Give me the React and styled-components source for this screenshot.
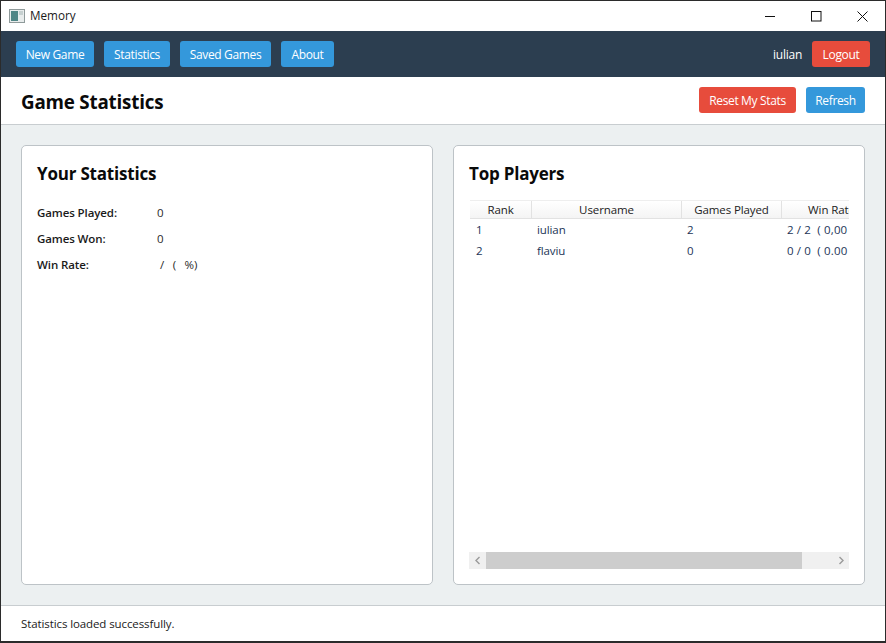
import React from "react";
import styled, { createGlobalStyle } from "styled-components";

const GlobalStyle = createGlobalStyle`
  html, body {
    margin: 0;
    padding: 0;
    background: #fff;
  }
  * {
    box-sizing: border-box;
  }
`;

const Window = styled.div`
  width: 886px;
  height: 643px;
  display: flex;
  flex-direction: column;
  border: 1px solid #2b2b2b;
  border-bottom-width: 2px;
  font-family: "Open Sans", "Noto Sans", sans-serif;
  font-size: 12px;
  color: #111;
  overflow: hidden;
`;

const TitleBar = styled.div`
  height: 30px;
  flex: none;
  display: flex;
  align-items: center;
  padding-left: 8px;
  background: #fff;
`;

const AppIcon = styled.svg`
  width: 16px;
  height: 16px;
  margin-right: 5px;
`;

const TitleText = styled.span`
  flex: 1;
  font-size: 11.7px;
  line-height: 14px;
  margin-bottom: 2px;
  color: #1a1a1a;
`;

const WinButton = styled.div`
  width: 46px;
  height: 30px;
  display: flex;
  align-items: center;
  justify-content: center;
`;

const NavBar = styled.div`
  height: 46px;
  flex: none;
  display: flex;
  align-items: center;
  gap: 10px;
  padding: 0 15px;
  background: #2c3e50;
`;

const Button = styled.div`
  width: ${({ $width }) => $width}px;
  height: 26px;
  display: flex;
  align-items: center;
  justify-content: center;
  border-radius: 3px;
  font-size: 12px;
  letter-spacing: -0.35px;
  color: #fff;
  white-space: nowrap;
  background: ${({ $danger }) => ($danger ? "#e74c3c" : "#3498db")};
`;

const Spacer = styled.div`
  flex: 1;
`;

const UserName = styled.span`
  color: #fff;
  font-size: 12px;
  letter-spacing: -0.25px;
`;

const Header = styled.div`
  height: 48px;
  flex: none;
  display: flex;
  align-items: center;
  justify-content: space-between;
  padding: 0 20px;
  background: #fff;
  border-bottom: 1px solid #c8cdd0;
`;

const PageTitle = styled.h1`
  margin: 2px 0 0;
  font-size: 18.8px;
  font-weight: 700;
  letter-spacing: -0.2px;
  color: #0a0a0a;
`;

const HeaderActions = styled.div`
  display: flex;
  gap: 10px;
  margin-bottom: 1px;
`;

const Content = styled.div`
  flex: 1;
  min-height: 0;
  display: grid;
  grid-template-columns: 1fr 1fr;
  gap: 20px;
  padding: 20px;
  background: #ecf0f1;
`;

const Card = styled.div`
  background: #fff;
  border: 1px solid #bdc3c7;
  border-radius: 5px;
  padding: 15px;
  display: flex;
  flex-direction: column;
  min-width: 0;
`;

const CardTitle = styled.h2`
  margin: 1px 0 13px;
  font-size: 17px;
  line-height: 24px;
  font-weight: 700;
  letter-spacing: -0.2px;
  color: #0a0a0a;
`;

const StatRow = styled.div`
  display: flex;
  height: 26px;
  align-items: center;
  font-size: 11.5px;
  letter-spacing: -0.1px;
`;

const StatLabel = styled.span`
  width: 120px;
  font-weight: 600;
  color: #1a1a1a;
`;

const StatValue = styled.span`
  color: #2a2a2a;
  white-space: pre;
`;

const TableWrap = styled.div`
  flex: 1;
  display: flex;
  flex-direction: column;
  min-height: 0;
`;

const TableClip = styled.div`
  flex: 1;
  margin-left: 1px;
  overflow: hidden;
`;

const HeadRow = styled.div`
  display: grid;
  grid-template-columns: 62px 150px 100px 100px;
  height: 19px;
  margin-top: 1px;
  background: linear-gradient(#ffffff, #f4f4f4);
  border-top: 1px solid #eeeeee;
  border-bottom: 1px solid #e2e2e2;
`;

const HeadCell = styled.div`
  display: flex;
  align-items: center;
  justify-content: center;
  font-size: 11.5px;
  letter-spacing: -0.1px;
  color: #222;
  white-space: nowrap;
  border-right: 1px solid #e2e2e2;
`;

const BodyRow = styled.div`
  display: grid;
  grid-template-columns: 62px 150px 100px 68px;
  height: 21px;
  align-items: center;
  font-size: 11.5px;
  letter-spacing: -0.1px;
  color: #1c3557;
`;

const BodyCell = styled.div`
  padding-left: ${({ $pad }) => $pad}px;
  letter-spacing: ${({ $wide }) => ($wide ? "0.15px" : "inherit")};
  white-space: pre;
  overflow: hidden;
`;

const ScrollBar = styled.div`
  height: 17px;
  flex: none;
  display: flex;
  align-items: center;
  background: #f0f0f0;
`;

const ScrollArrow = styled.div`
  width: 17px;
  height: 17px;
  display: flex;
  align-items: center;
  justify-content: center;
  flex: none;
`;

const ScrollThumb = styled.div`
  width: 316px;
  height: 17px;
  flex: none;
  background: #cdcdcd;
`;

const StatusBar = styled.div`
  height: 36px;
  flex: none;
  display: flex;
  align-items: center;
  padding: 0 20px;
  background: #fff;
  border-top: 1px solid #c8cdd0;
  font-size: 11.5px;
  letter-spacing: -0.1px;
  color: #1a1a1a;
`;

const Chevron = ({ left }) => (
  <svg width="8" height="9" viewBox="0 0 8 9">
    <path
      d={left ? "M5.5 1 L2 4.5 L5.5 8" : "M2.5 1 L6 4.5 L2.5 8"}
      fill="none"
      stroke="#9a9a9a"
      strokeWidth="1.4"
    />
  </svg>
);

const players = [
  { rank: "1", name: "iulian", played: "2", rate: "2 / 2  ( 0,00" },
  { rank: "2", name: "flaviu", played: "0", rate: "0 / 0  ( 0.00" },
];

export default function App() {
  return (
    <Window>
      <GlobalStyle />
      <TitleBar>
        <AppIcon viewBox="0 0 16 16">
          <rect x="0.5" y="1.5" width="15" height="13" fill="#e8ecec" stroke="#8f9a9a" />
          <rect x="2" y="3" width="7" height="10" fill="#4f8585" />
          <rect x="10" y="3" width="4" height="4" fill="#c6d0d0" />
        </AppIcon>
        <TitleText>Memory</TitleText>
        <WinButton>
          <svg width="11" height="11" viewBox="0 0 11 11">
            <path d="M0 5.5 H10" stroke="#111" strokeWidth="1" />
          </svg>
        </WinButton>
        <WinButton>
          <svg width="11" height="11" viewBox="0 0 11 11">
            <rect x="0.5" y="0.5" width="9.5" height="9.5" fill="none" stroke="#111" />
          </svg>
        </WinButton>
        <WinButton>
          <svg width="11" height="11" viewBox="0 0 11 11">
            <path d="M0.5 0.5 L10.5 10.5 M10.5 0.5 L0.5 10.5" stroke="#111" strokeWidth="1" />
          </svg>
        </WinButton>
      </TitleBar>
      <NavBar>
        <Button $width={78}>New Game</Button>
        <Button $width={66}>Statistics</Button>
        <Button $width={91}>Saved Games</Button>
        <Button $width={53}>About</Button>
        <Spacer />
        <UserName>iulian</UserName>
        <Button $width={58} $danger>Logout</Button>
      </NavBar>
      <Header>
        <PageTitle>Game Statistics</PageTitle>
        <HeaderActions>
          <Button $width={97} $danger>Reset My Stats</Button>
          <Button $width={59}>Refresh</Button>
        </HeaderActions>
      </Header>
      <Content>
        <Card>
          <CardTitle>Your Statistics</CardTitle>
          <StatRow>
            <StatLabel>Games Played:</StatLabel>
            <StatValue>0</StatValue>
          </StatRow>
          <StatRow>
            <StatLabel>Games Won:</StatLabel>
            <StatValue>0</StatValue>
          </StatRow>
          <StatRow>
            <StatLabel>Win Rate:</StatLabel>
            <StatValue> /   (   %)</StatValue>
          </StatRow>
        </Card>
        <Card>
          <CardTitle>Top Players</CardTitle>
          <TableWrap>
            <TableClip>
              <HeadRow>
                <HeadCell>Rank</HeadCell>
                <HeadCell>Username</HeadCell>
                <HeadCell>Games Played</HeadCell>
                <HeadCell>Win Rate</HeadCell>
              </HeadRow>
              {players.map((p) => (
                <BodyRow key={p.rank}>
                  <BodyCell $pad={6}>{p.rank}</BodyCell>
                  <BodyCell $pad={5}>{p.name}</BodyCell>
                  <BodyCell $pad={5}>{p.played}</BodyCell>
                  <BodyCell $pad={5} $wide>{p.rate}</BodyCell>
                </BodyRow>
              ))}
            </TableClip>
            <ScrollBar>
              <ScrollArrow>
                <Chevron left />
              </ScrollArrow>
              <ScrollThumb />
              <Spacer />
              <ScrollArrow>
                <Chevron />
              </ScrollArrow>
            </ScrollBar>
          </TableWrap>
        </Card>
      </Content>
      <StatusBar>Statistics loaded successfully.</StatusBar>
    </Window>
  );
}
